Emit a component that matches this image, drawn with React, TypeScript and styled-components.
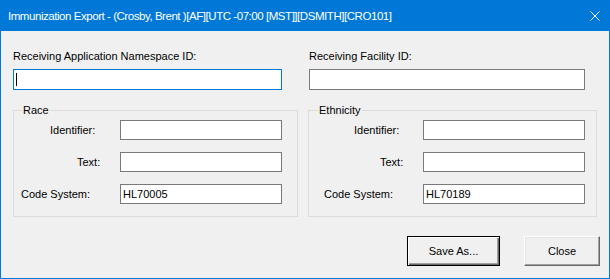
import React from "react";
import styled, { createGlobalStyle } from "styled-components";

const GlobalStyle = createGlobalStyle`
  html, body {
    margin: 0;
    padding: 0;
    background: #f0f0f0;
  }
`;

const Window = styled.div`
  width: 610px;
  height: 279px;
  box-sizing: border-box;
  border: 1px solid #0078d7;
  border-top: none;
  background: #f0f0f0;
  display: flex;
  flex-direction: column;
  font-family: "Liberation Sans", Arial, sans-serif;
  font-size: 11px;
  color: #000;
`;

const TitleBar = styled.div`
  height: 31px;
  margin: 0 -1px;
  background: #0078d7;
  display: flex;
  align-items: center;
  justify-content: space-between;
  padding: 0 10px 0 8px;
  color: #fff;
`;

const Title = styled.span`
  font-size: 11.5px;
  letter-spacing: -0.45px;
  white-space: nowrap;
`;

const CloseGlyph = styled.svg`
  width: 10px;
  height: 10px;
  display: block;
`;

const Body = styled.div`
  display: flex;
  gap: 10px;
  padding: 19px 0 0 12px;
`;

const Column = styled.div<{ $width: number }>`
  display: flex;
  flex-direction: column;
  width: ${({ $width }) => `${$width}px`};
`;

const Label = styled.div<{ $indent?: number }>`
  height: 13px;
  line-height: 13px;
  margin-bottom: 6px;
  padding-left: ${({ $indent = 0 }) => `${$indent}px`};
  white-space: nowrap;
`;

const TextBox = styled.div<{ $width: number; $height?: number; $focused?: boolean; $indent?: number }>`
  box-sizing: border-box;
  width: ${({ $width }) => `${$width}px`};
  height: ${({ $height = 20 }) => `${$height}px`};
  margin-left: ${({ $indent = 0 }) => `${$indent}px`};
  border: 1px solid ${({ $focused }) => ($focused ? "#0078d7" : "#7a7a7a")};
  background: #fff;
  padding: 0 3px 0 2px;
  display: flex;
  align-items: center;
  white-space: nowrap;
`;

const Caret = styled.span`
  display: inline-block;
  width: 1px;
  height: 13px;
  background: #000;
`;

const Group = styled.fieldset`
  margin: 14px 0 0;
  padding: 3px 0 12px;
  border: 1px solid #dcdcdc;
  min-width: 0;
`;

const Legend = styled.legend<{ $offset: number }>`
  margin-left: ${({ $offset }) => `${$offset}px`};
  padding: 0 1px;
  line-height: 13px;
`;

const Rows = styled.div`
  display: flex;
  flex-direction: column;
  gap: 12px;
`;

const Row = styled.div<{ $labelWidth: number }>`
  display: grid;
  grid-template-columns: ${({ $labelWidth }) => `${$labelWidth}px 162px`};
  align-items: center;
  height: 20px;
`;

const RowLabel = styled.span<{ $indent: number }>`
  padding-left: ${({ $indent }) => `${$indent}px`};
  white-space: nowrap;
`;

const ButtonRow = styled.div`
  display: flex;
  justify-content: flex-end;
  gap: 24px;
  margin-top: 19px;
  padding-right: 9px;
`;

const Button = styled.button<{ $width: number; $default?: boolean }>`
  box-sizing: border-box;
  width: ${({ $width }) => `${$width}px`};
  height: 30px;
  padding: 0;
  font-family: inherit;
  font-size: 11px;
  color: #000;
  background: #f0f0f0;
  ${({ $default }) =>
    $default
      ? `
    border: 1px solid #000;
    box-shadow: inset 1px 1px #fff, inset -1px -1px #696969, inset -2px -2px #a0a0a0;
  `
      : `
    border: 1px solid;
    border-color: #fff #696969 #696969 #fff;
    box-shadow: inset -1px -1px #a0a0a0, inset 1px 1px #e3e3e3;
  `}
`;

type CodeRow = { label: string; indent: number; value?: string };

type GroupProps = {
  title: string;
  legendOffset: number;
  labelWidth: number;
  rows: CodeRow[];
};

const CodeGroup = ({ title, legendOffset, labelWidth, rows }: GroupProps) => (
  <Group>
    <Legend $offset={legendOffset}>{title}</Legend>
    <Rows>
      {rows.map((r) => (
        <Row key={r.label} $labelWidth={labelWidth}>
          <RowLabel $indent={r.indent}>{r.label}</RowLabel>
          <TextBox $width={162}>{r.value}</TextBox>
        </Row>
      ))}
    </Rows>
  </Group>
);

const App = () => {
  return (
    <>
      <GlobalStyle />
      <Window>
        <TitleBar>
          <Title>Immunization Export - (Crosby, Brent )[AF][UTC -07:00 [MST]][DSMITH][CRO101]</Title>
          <CloseGlyph viewBox="0 0 10 10">
            <path d="M0.5 0.5 L9.5 9.5 M9.5 0.5 L0.5 9.5" stroke="#fff" strokeWidth="1" />
          </CloseGlyph>
        </TitleBar>
        <Body>
          <Column $width={285}>
            <Label>Receiving Application Namespace ID:</Label>
            <TextBox $width={269} $height={21} $focused>
              <Caret />
            </TextBox>
            <CodeGroup
              title="Race"
              legendOffset={8}
              labelWidth={106}
              rows={[
                { label: "Identifier:", indent: 36 },
                { label: "Text:", indent: 63 },
                { label: "Code System:", indent: 7, value: "HL70005" },
              ]}
            />
          </Column>
          <Column $width={289}>
            <Label $indent={1}>Receiving Facility ID:</Label>
            <TextBox $width={276} $height={21} $indent={1} />
            <CodeGroup
              title="Ethnicity"
              legendOffset={9}
              labelWidth={114}
              rows={[
                { label: "Identifier:", indent: 45 },
                { label: "Text:", indent: 71 },
                { label: "Code System:", indent: 15, value: "HL70189" },
              ]}
            />
          </Column>
        </Body>
        <ButtonRow>
          <Button $width={93} $default>
            Save As...
          </Button>
          <Button $width={76}>Close</Button>
        </ButtonRow>
      </Window>
    </>
  );
};

export default App;
